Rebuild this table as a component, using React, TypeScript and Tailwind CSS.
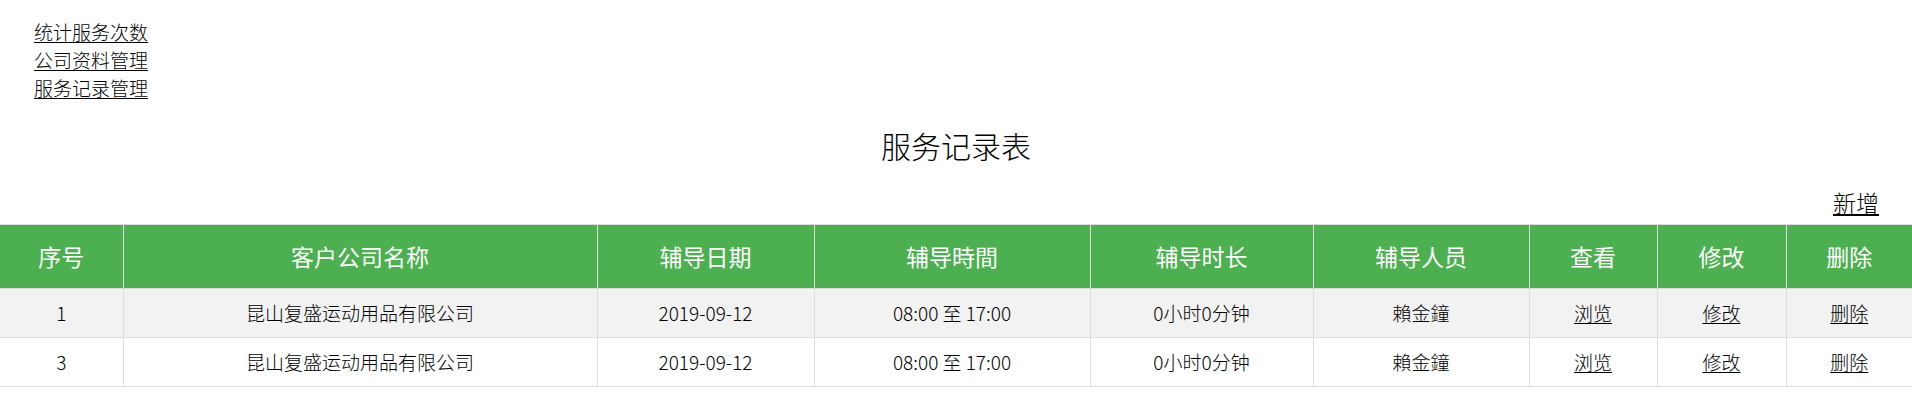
const links = ['统计服务次数', '公司资料管理', '服务记录管理'];

const columns = [
  { title: '序号', width: 'w-[123px]' },
  { title: '客户公司名称', width: 'w-[474px]' },
  { title: '辅导日期', width: 'w-[217px]' },
  { title: '辅导時間', width: 'w-[276px]' },
  { title: '辅导时长', width: 'w-[223px]' },
  { title: '辅导人员', width: 'w-[216px]' },
  { title: '查看', width: 'w-[128px]' },
  { title: '修改', width: 'w-[129px]' },
  { title: '删除', width: 'w-[126px]' },
];

const records = [
  { id: 1, company: '昆山复盛运动用品有限公司', date: '2019-09-12', time: '08:00 至 17:00', length: '0小时0分钟', staff: '賴金鐘' },
  { id: 3, company: '昆山复盛运动用品有限公司', date: '2019-09-12', time: '08:00 至 17:00', length: '0小时0分钟', staff: '賴金鐘' },
];

const font = "font-['Noto_Sans_CJK_SC',_'Noto_Sans',_sans-serif]";

export default function App() {
  return (
    <div className={`min-h-[411px] w-[1912px] bg-white text-black font-light ${font}`}>
      <nav className="flex flex-col items-start pl-[34px] pt-[18px]">
        {links.map((label) => (
          <a key={label} href="#" className="text-[19px] leading-[28px] text-black underline underline-offset-2">
            {label}
          </a>
        ))}
      </nav>

      <h1 className="mt-[23px] text-center text-[30px] leading-[40px] font-light">服务记录表</h1>

      <div className="mt-[22px] flex justify-end pr-[33px]">
        <a href="#" className="text-[23px] leading-[30px] text-black underline underline-offset-2">
          新增
        </a>
      </div>

      <table className="mt-[7px] w-full table-fixed border-collapse">
        <colgroup>
          {columns.map((c) => (
            <col key={c.title} className={c.width} />
          ))}
        </colgroup>
        <thead>
          <tr className="h-[64px] bg-[#4caf50] text-white">
            {columns.map((c) => (
              <th key={c.title} className="border border-[#ddd] text-[23px] font-normal first:border-l-0 last:border-r-0">
                {c.title}
              </th>
            ))}
          </tr>
        </thead>
        <tbody className="text-[19px]">
          {records.map((r, i) => (
            <tr key={r.id} className={`h-[49px] ${i % 2 === 0 ? 'bg-[#f2f2f2]' : 'bg-white'}`}>
              <td className="border border-l-0 border-[#ddd] text-center">{r.id}</td>
              <td className="border border-[#ddd] text-center">{r.company}</td>
              <td className="border border-[#ddd] text-center">{r.date}</td>
              <td className="border border-[#ddd] text-center">{r.time}</td>
              <td className="border border-[#ddd] text-center">{r.length}</td>
              <td className="border border-[#ddd] text-center">{r.staff}</td>
              <td className="border border-[#ddd] text-center">
                <a href="#" className="underline underline-offset-2">浏览</a>
              </td>
              <td className="border border-[#ddd] text-center">
                <a href="#" className="underline underline-offset-2">修改</a>
              </td>
              <td className="border border-r-0 border-[#ddd] text-center">
                <a href="#" className="underline underline-offset-2">删除</a>
              </td>
            </tr>
          ))}
        </tbody>
      </table>
    </div>
  );
}
